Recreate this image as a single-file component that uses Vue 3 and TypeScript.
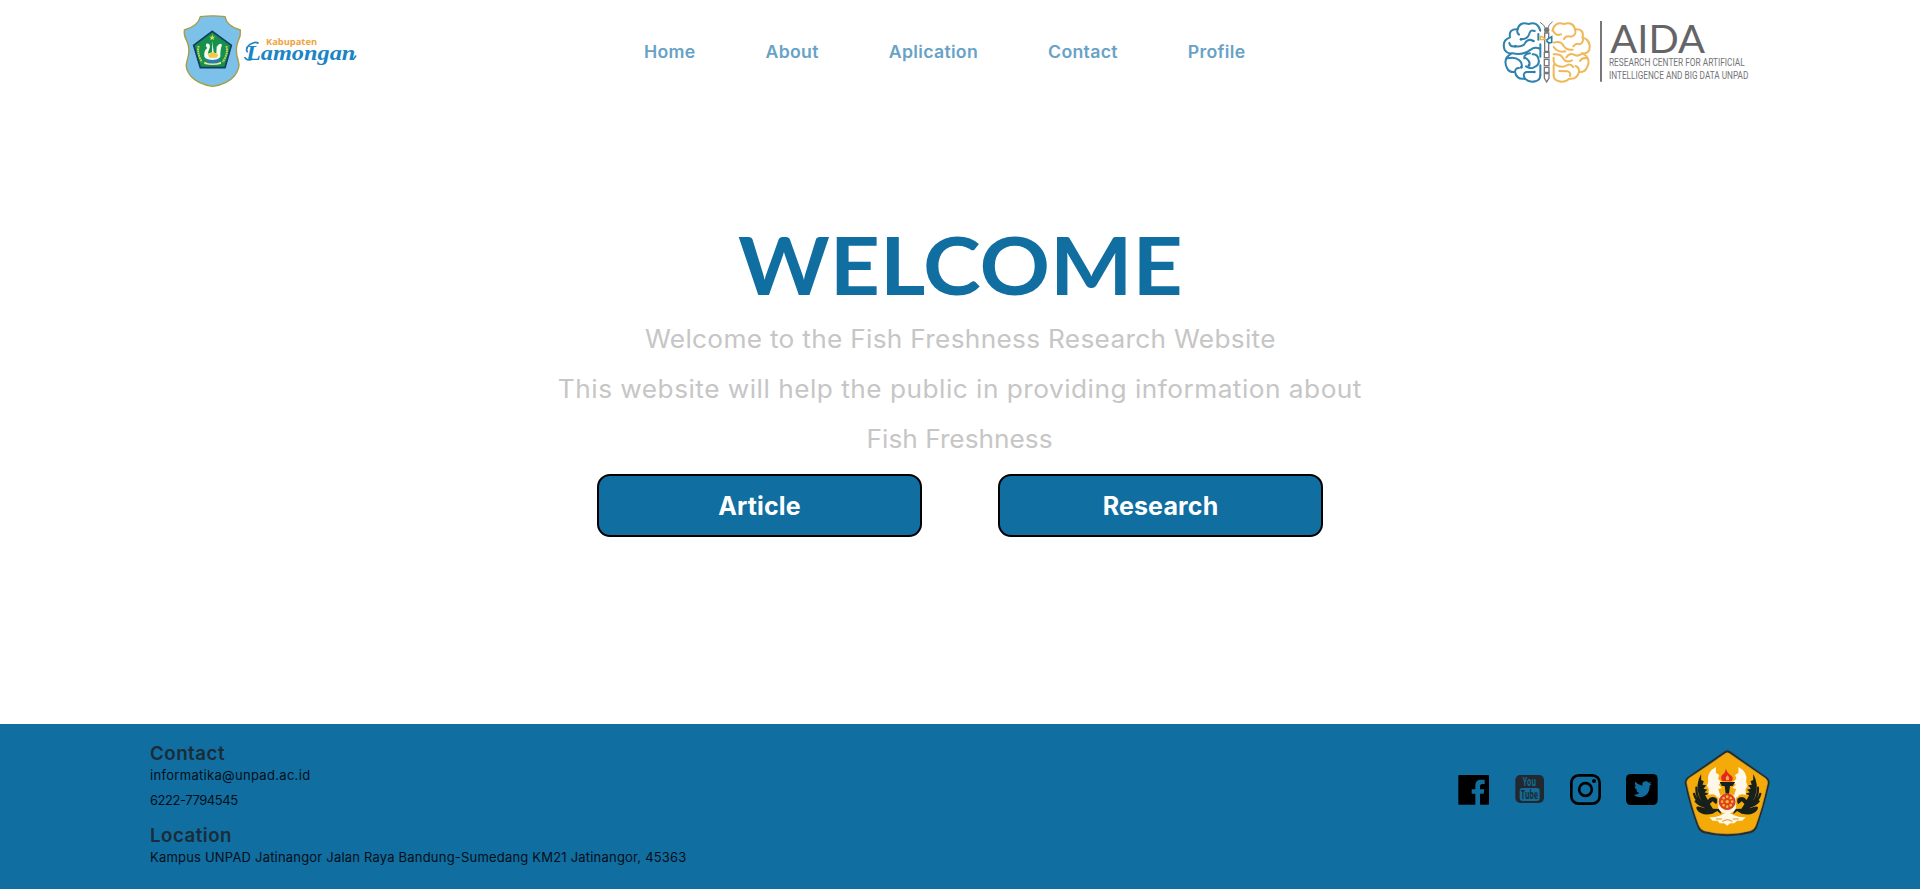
<script setup lang="ts">
interface Contact {
  text: string
  kind: 'mail' | 'phone'
}

const navItems: string[] = ['Home', 'About', 'Aplication', 'Contact', 'Profile']
const contacts: Contact[] = [
  { text: 'informatika@unpad.ac.id', kind: 'mail' },
  { text: '6222-7794545', kind: 'phone' },
]
const address = 'Kampus UNPAD Jatinangor Jalan Raya Bandung-Sumedang KM21 Jatinangor, 45363'
const spokes: number[] = [0, 45, 90, 135, 180, 225, 270, 315]
</script>

<template>
  <div class="page">
    <header class="header">
      <svg class="lamongan" viewBox="0 0 600 270" role="img" aria-label="Kabupaten Lamongan">
        <path class="shield" d="M91 35Q128 30 165 35Q170 64 211 75Q213 91 205 107Q193 133 205 168Q212 190 193 213Q172 238 128 244Q84 238 62 213Q43 190 51 168Q63 133 50 107Q41 91 43 75Q84 64 91 35Z" />
        <path d="M127 79L184 121L165 188H91L71 121Z" fill="#15914d" stroke="#143b62" stroke-width="5" />
        <path d="M127 88l2 7h7l-6 4 2 7-5-4-6 4 2-7-5-4h7z" fill="#e6dc58" />
        <path d="M86 123Q80 145 96 171M169 123Q176 145 158 171" fill="none" stroke="#c9d75b" stroke-width="6" stroke-dasharray="5 2" />
        <path d="M103 155Q101 136 112 129Q105 123 109 116Q119 113 120 125L113 146L126 142L127 108L131 142L139 146L140 125Q151 110 156 120Q151 130 151 155L143 165H111Z" fill="#f6faf0" />
        <path d="M114 149Q127 134 145 149L140 158H118Z" fill="#f0cb42" />
        <path d="M107 160Q128 171 151 158L146 170Q127 180 112 170Z" fill="#287bc0" />
        <path d="M103 170Q128 181 153 170V177Q128 183 103 177Z" fill="#eee5a8" />
        <text x="288" y="119" class="kabupaten" textLength="153" lengthAdjust="spacingAndGlyphs">Kabupaten</text>
        <text x="228" y="165" class="lamongan-name" textLength="328" lengthAdjust="spacingAndGlyphs">Lamongan</text>
        <path d="M225 158Q232 168 247 163M232 140Q225 130 239 119Q255 108 264 114M547 162Q553 162 557 153" fill="none" stroke="#1a84c5" stroke-width="5" stroke-linecap="round" />
      </svg>

      <nav class="nav">
        <a v-for="item in navItems" :key="item">{{ item }}</a>
      </nav>

      <svg class="aida" viewBox="0 0 810 240" role="img" aria-label="AIDA">
        <g class="lobe blue">
          <path d="M151 62Q143 33 116 42Q88 34 83 58Q55 56 60 82Q34 91 44 120Q53 132 65 130Q37 145 51 174Q57 188 75 186Q80 210 105 206Q119 219 136 214Q151 211 151 196" />
          <path d="M83 58Q79 68 87 74M93 88Q115 88 119 68Q122 58 134 63M76 109Q60 111 58 99M77 109Q102 111 107 96Q116 85 130 93M68 130Q98 137 122 119Q134 109 151 117M145 72V89M52 145Q75 139 88 151Q99 161 94 172M75 186Q76 173 87 174M105 206Q96 190 109 186L133 186M107 144Q123 155 117 166M128 133Q143 132 146 149Q149 163 137 169M151 103V140M151 166V196M137 169Q125 180 108 169M120 130Q101 132 103 145" />
        </g>
        <g class="lobe gold">
          <path d="M187 62Q195 33 222 42Q250 34 255 58Q283 56 278 82Q304 91 298 120Q291 132 277 130Q306 145 290 174Q283 188 267 186Q260 210 238 206Q224 219 207 214Q191 211 191 196" />
          <path d="M189 62Q198 79 213 73M255 58Q261 74 244 80Q227 75 222 87M278 82Q282 98 269 103Q258 98 250 109M191 98Q213 91 221 108Q229 121 248 119M191 111Q204 129 226 124M277 130Q264 142 250 133Q237 129 229 142M191 133Q211 130 218 143Q227 160 246 151M191 143Q188 165 207 169Q221 173 232 165Q241 160 250 171M191 166V196M208 183L233 184Q244 188 240 198M267 186Q269 173 257 168M290 145Q276 142 270 153" />
        </g>
        <g fill="none" stroke="#77777b" stroke-width="4">
          <path d="M168 59Q163 43 150 37M172 59Q175 43 188 35" stroke-width="3" />
          <circle cx="170" cy="60" r="6" fill="#77777b" />
          <path d="M164 69H176V124H164ZM163 127H177V143H163ZM163 148H177V167H163ZM163 172H177V187H163ZM163 191H177V204L170 216L163 204Z" />
        </g>
        <path d="M151 79Q161 80 166 89H151Z" fill="#fff" stroke="#e8b34b" stroke-width="4" />
        <path d="M171 89L185 80V97Q178 102 171 94Z" fill="#fff" stroke="#247fac" stroke-width="5" />
        <g fill="#247fac">
          <circle cx="93" cy="88" r="4" /><circle cx="76" cy="109" r="4" /><circle cx="94" cy="172" r="4" />
          <circle cx="133" cy="186" r="4" /><circle cx="117" cy="166" r="4" /><circle cx="130" cy="93" r="4" />
        </g>
        <path d="M333 33V215" stroke="#77777a" stroke-width="6" />
        <text x="361" y="130" class="aida-name" textLength="284" lengthAdjust="spacingAndGlyphs">AIDA</text>
        <text x="357" y="169" class="aida-sub" textLength="407" lengthAdjust="spacingAndGlyphs">RESEARCH CENTER FOR ARTIFICIAL</text>
        <text x="357" y="207" class="aida-sub" textLength="418" lengthAdjust="spacingAndGlyphs">INTELLIGENCE AND BIG DATA UNPAD</text>
      </svg>
    </header>

    <main class="hero">
      <h1>WELCOME</h1>
      <p class="intro">Welcome to the Fish Freshness Research Website</p>
      <p class="intro wide">This website will help the public in providing information about</p>
      <p class="intro last">Fish Freshness</p>
      <div class="actions">
        <button type="button">Article</button>
        <button type="button">Research</button>
      </div>
    </main>

    <footer class="footer">
      <section class="details">
        <h2>Contact</h2>
        <p v-for="c in contacts" :key="c.kind" :class="c.kind">{{ c.text }}</p>
        <h2 class="location">Location</h2>
        <p class="address">{{ address }}</p>
      </section>

      <div class="links">
        <div class="social">
          <svg viewBox="0 0 96 96" aria-label="Facebook">
            <path fill-rule="evenodd" d="M3 3H90Q93 3 93 6V90Q93 92 90 92H66V59H77L79 46H66V37Q66 30 73 30H80V17H69Q52 17 52 34V46H41V59H52V92H3Q1 92 1 89V6Q1 3 3 3Z" />
          </svg>
          <svg viewBox="0 0 96 96" aria-label="YouTube">
            <rect x="4" y="3" width="86" height="84" rx="15" fill="#22292e" />
            <rect x="17" y="42" width="60" height="39" rx="9" fill="#136b98" />
            <text x="26" y="35" class="tube" fill="#136b98" textLength="40" lengthAdjust="spacingAndGlyphs">You</text>
            <text x="21" y="75" class="tube" fill="#22292e" textLength="51" lengthAdjust="spacingAndGlyphs">Tube</text>
          </svg>
          <svg viewBox="0 0 96 96" aria-label="Instagram">
            <rect x="4" y="4" width="85" height="85" rx="22" fill="none" stroke="#000" stroke-width="8" />
            <circle cx="46.500" cy="46.500" r="19" fill="none" stroke="#000" stroke-width="8" />
            <circle cx="72" cy="21" r="6" />
          </svg>
          <svg viewBox="0 0 96 96" aria-label="Twitter">
            <rect x="0" y="0" width="95" height="93" rx="14" />
            <path fill="#116d9f" d="M23 62Q33 63 40 57Q33 56 30 49H35Q26 45 26 36L31 38Q24 30 28 23Q36 33 49 35Q47 23 58 22Q64 21 68 26L76 23L71 30L77 29L71 35Q70 69 39 69Q30 69 23 62Z" />
          </svg>
        </div>

        <svg class="seal" viewBox="13 15 256 261" preserveAspectRatio="none" aria-label="Universitas Padjadjaran">
          <path d="M132 20Q142 11 153 20Q202 56 259 96Q271 104 267 118Q251 190 231 246Q226 260 213 264Q142 284 70 264Q58 260 53 246Q31 190 16 118Q12 104 24 96Q81 56 132 20Z" fill="#282d29" />
          <path d="M134 27Q142 20 150 27Q200 62 255 100Q264 107 261 117Q246 188 226 242Q222 253 211 257Q142 276 73 257Q62 253 58 242Q37 188 22 117Q19 107 28 100Q85 62 134 27Z" fill="#f4aa08" stroke="#d1a13a" stroke-width="2" />
          <path d="M64 87Q45 119 59 156L75 190Q42 177 52 195Q66 214 98 206L112 198L123 207L122 192L99 191L90 177L98 169L109 178Q117 160 103 157Q91 153 84 165L76 151L87 146L74 142L83 134L71 131L79 121L68 119L72 109L64 105Z" fill="#18201c" />
          <path d="M219 87Q238 119 224 156L208 190Q241 177 231 195Q217 214 185 206L171 198L160 207L161 192L184 191L193 177L185 169L174 178Q166 160 180 157Q192 153 199 165L207 151L196 146L209 142L200 134L212 131L204 121L215 119L211 109L219 105Z" fill="#18201c" />
          <path d="M50 128Q49 157 67 174M43 147Q49 171 73 181M48 169Q58 181 78 186M233 128Q234 157 216 174M240 147Q234 171 210 181M235 169Q225 181 205 186" fill="none" stroke="#18201c" stroke-width="7" stroke-linecap="round" />
          <path d="M108 66Q78 82 85 111L81 122L87 133L86 150Q104 143 112 158L121 151L115 132L126 129L116 119L124 111L114 101L118 90L108 83Z" fill="#fff8e8" />
          <path d="M175 66Q205 82 198 111L202 122L196 133L197 150Q179 143 171 158L162 151L168 132L157 129L167 119L159 111L169 101L165 90L175 83Z" fill="#fff8e8" />
          <path d="M115 154V188Q120 202 134 205H150Q165 201 168 188V154L156 149Q141 139 127 149Z" fill="#fff5df" />
          <path d="M119 111H165L158 123H150L147 146H137L134 123H126Z" fill="#17211d" />
          <path d="M127 108Q118 93 133 85L138 72Q141 83 148 88Q165 99 154 109Z" fill="#e52521" />
          <path d="M139 106Q134 99 143 91Q150 100 146 106Z" fill="#f6ad48" />
          <circle cx="141.500" cy="170" r="24" fill="#dd421c" stroke="#b73414" stroke-width="2" />
          <circle v-for="a in spokes" :key="a" cx="141.500" cy="155" r="4" fill="#f3b43b" :transform="`rotate(${a} 141.5 170)`" />
          <circle cx="141.500" cy="170" r="5" fill="#f7b647" />
          <path d="M88 216Q103 219 123 211Q134 206 141 198Q149 206 162 211Q181 219 197 216L186 227H171L163 235H150L142 242L132 235H119L113 227H98Z" fill="#fff8e7" />
          <path d="M108 222H126M158 222H176M127 230Q142 219 157 230" fill="none" stroke="#dc9c22" stroke-width="3" />
        </svg>
      </div>
    </footer>
  </div>
</template>

<style>
body {
  margin: 0;
  background: #fff;
}
</style>

<style scoped>
.page {
  display: flex;
  flex-direction: column;
  height: 889px;
  font-family: Inter, "Open Sans", sans-serif;
}

h1,
h2,
p {
  margin: 0;
}

.header {
  display: flex;
  align-items: center;
  height: 100px;
  padding: 0 160px 0 170px;
}

.lamongan {
  width: 200px;
  height: 90px;
}

.shield {
  fill: #7bc1e9;
  stroke: #a69d45;
  stroke-width: 4;
}

.kabupaten {
  fill: #f0a33e;
  font: 700 27px "Open Sans", sans-serif;
}

.lamongan-name {
  fill: #1a84c5;
  font: italic 700 66px "Liberation Serif", serif;
}

.nav {
  display: flex;
  gap: 67.4px;
  margin: 3px 0 0 274px;
  color: #68a2c6;
  font-size: 17px;
  font-weight: 600;
  line-height: 24px;
  letter-spacing: 0.28px;
  transform: scaleX(1.04);
  transform-origin: left;
}

.aida {
  width: 270px;
  height: 80px;
  margin-left: auto;
}

.lobe {
  fill: none;
  stroke-width: 6;
  stroke-linecap: round;
  stroke-linejoin: round;
}

.blue {
  stroke: #2f83ae;
}

.gold {
  stroke: #efb95a;
}

.aida-name {
  fill: #656568;
  font: 400 118px Lato, sans-serif;
}

.aida-sub {
  fill: #747477;
  font: 400 31px Roboto, sans-serif;
}

.hero {
  display: flex;
  flex: 1;
  flex-direction: column;
  align-items: center;
  padding-top: 123px;
}

h1 {
  margin-bottom: 10px;
  color: #106ea1;
  font: 700 81px/81px Lato, sans-serif;
  transform: scaleX(1.078);
}

.intro {
  color: #c6c6c6;
  font-size: 25px;
  font-weight: 400;
  line-height: 50px;
  letter-spacing: 0.28px;
  transform: scaleX(1.05);
}

.intro.wide {
  letter-spacing: 0.46px;
}

.intro.last {
  letter-spacing: 0;
}

.actions {
  display: flex;
  gap: 76px;
  margin-top: 10px;
}

button {
  width: 325px;
  height: 63px;
  padding: 0;
  border: 2px solid #000;
  border-radius: 13px;
  background: #106ea1;
  color: #fff;
  font: 700 25px Inter, sans-serif;
  letter-spacing: 0.15px;
}

.footer {
  display: flex;
  justify-content: space-between;
  box-sizing: border-box;
  height: 165px;
  padding: 0 150px;
  background: #106ea1;
}

.details {
  padding-top: 20px;
  color: #050e17;
  font-size: 13px;
  line-height: 25px;
}

h2 {
  height: 19px;
  color: #1b2c38;
  font-size: 18.7px;
  font-weight: 600;
  line-height: 20px;
  letter-spacing: 0.5px;
}

.location {
  margin-top: 13px;
}

.mail {
  letter-spacing: 0.31px;
}

.phone {
  letter-spacing: -0.45px;
}

.address {
  letter-spacing: 0.2px;
}

.links {
  display: flex;
  align-items: flex-start;
  gap: 26px;
  padding-top: 26px;
}

.social {
  display: flex;
  gap: 24px;
  margin-top: 24px;
}

.social svg {
  width: 32px;
  height: 32px;
}

.tube {
  font: 700 36px "Open Sans", sans-serif;
}

.seal {
  width: 86px;
  height: 87px;
}
</style>
